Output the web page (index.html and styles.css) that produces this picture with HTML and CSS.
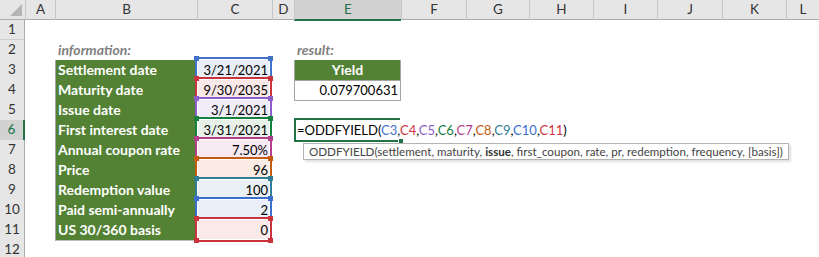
FILE: index.html
```html
<!DOCTYPE html>
<html>
<head>
<meta charset="utf-8">
<link rel="stylesheet" href="styles.css">
</head>
<body>
<div class="sheet">
  <div class="row hdr">
    <div class="corner"><svg width="25" height="19" viewBox="0 0 25 19"><polygon points="10,16 22,16 22,4" fill="#b5b5b5"/></svg></div>
    <div class="ch">A</div><div class="ch">B</div><div class="ch">C</div><div class="ch">D</div>
    <div class="ch sel">E</div><div class="ch">F</div><div class="ch">G</div><div class="ch">H</div>
    <div class="ch">I</div><div class="ch">J</div><div class="ch">K</div><div class="ch">L</div>
  </div>
  <div class="row"><div class="rh">1</div></div>
  <div class="row"><div class="rh">2</div><div class="cell b lbl">information:</div><div class="cell e lbl">result:</div></div>
  <div class="row"><div class="rh">3</div><div class="cell b g">Settlement date</div><div class="cell c k1">3/21/2021<span class="hl"><i class="tl"></i><i class="tr"></i></span></div><div class="cell e yh">Yield</div></div>
  <div class="row"><div class="rh">4</div><div class="cell b g">Maturity date</div><div class="cell c k2">9/30/2035<span class="hl"><i class="tl"></i><i class="tr"></i></span></div><div class="cell e yv">0.079700631</div></div>
  <div class="row"><div class="rh">5</div><div class="cell b g">Issue date</div><div class="cell c k3">3/1/2021<span class="hl"><i class="tl"></i><i class="tr"></i></span></div></div>
  <div class="row"><div class="rh sel">6</div><div class="cell b g">First interest date</div><div class="cell c k4">3/31/2021<span class="hl"><i class="tl"></i><i class="tr"></i></span></div>
    <div class="cell e edit"><span class="cur"><i class="fh"></i></span><span class="f">=ODDFYIELD(<span class="r1">C3</span>,<span class="r2">C4</span>,<span class="r3">C5</span>,<span class="r4">C6</span>,<span class="r5">C7</span>,<span class="r6">C8</span>,<span class="r7">C9</span>,<span class="r8">C10</span>,<span class="r9">C11</span>)</span>
      <div class="tip">ODDFYIELD(settlement, maturity, <b>issue</b>, first_coupon, rate, pr, redemption, frequency, [basis])</div>
    </div>
  </div>
  <div class="row"><div class="rh">7</div><div class="cell b g">Annual coupon rate</div><div class="cell c k5">7.50%<span class="hl"><i class="tl"></i><i class="tr"></i></span></div></div>
  <div class="row"><div class="rh">8</div><div class="cell b g">Price</div><div class="cell c k6">96<span class="hl"><i class="tl"></i><i class="tr"></i></span></div></div>
  <div class="row"><div class="rh">9</div><div class="cell b g">Redemption value</div><div class="cell c k7">100<span class="hl"><i class="tl"></i><i class="tr"></i></span></div></div>
  <div class="row"><div class="rh">10</div><div class="cell b g">Paid semi-annually</div><div class="cell c k8">2<span class="hl"><i class="tl"></i><i class="tr"></i></span></div></div>
  <div class="row"><div class="rh">11</div><div class="cell b g">US 30/360 basis</div><div class="cell c k9">0<span class="hl last"><i class="tl"></i><i class="tr"></i><i class="bl"></i><i class="br"></i></span></div></div>
  <div class="row"><div class="rh">12</div></div>
</div>
</body>
</html>
```
FILE: styles.css
```css
* { box-sizing: border-box; margin: 0; padding: 0; }
body {
  width: 819px; height: 257px; overflow: hidden; background: #fff;
  font-family: Lato, "Liberation Sans", sans-serif; font-size: 13px; color: #000;
}
.sheet { width: 819px; }
.row {
  display: grid;
  grid-template-columns: 25px 30px 142px 75px 22px 107px 65px 63px 64px 64px 65px 64px 33px;
  height: 20px;
}
.hdr { background: #e6e6e6; border-bottom: 1px solid #ababab; }
.corner { display: flex; }
.ch { border-left: 1px solid #c6c6c6; text-align: center; line-height: 19px; color: #333; font-size: 13.5px; }
.ch.sel { background: #d2d2d2; color: #217346; border-bottom: 2px solid #217346; margin-bottom: -1px; }
.rh {
  grid-column: 1; background: #e6e6e6; border-right: 1px solid #ababab; border-bottom: 1px solid #cdcdcd;
  text-align: center; line-height: 19px; color: #333; font-size: 13.5px;
}
.rh.sel { background: #d2d2d2; color: #217346; border-right: 2px solid #217346; }
.cell { grid-row: 1; line-height: 20px; white-space: nowrap; padding: 0 3px; }
.b { grid-column: 3; }
.c { grid-column: 4; }
.e { grid-column: 6; }
.lbl { color: #7f7f7f; font-style: italic; font-weight: bold; font-size: 14px; border-bottom: 1px solid #a5a5a5; }
.g { background: #548235; color: #fff; font-weight: bold; font-size: 14px; border-left: 1px solid #a5a5a5; border-bottom: 1px solid #bcbcbc; padding-left: 2px; }
.c { position: relative; text-align: right; padding-right: 4px; }
.hl {
  position: absolute; top: -3px; left: -2px; right: 0; bottom: 1px;
  border: 2px solid var(--k); box-shadow: inset 0 0 0 1px #fff;
}
.hl.last { bottom: -1px; }
.hl i { position: absolute; width: 5px; height: 5px; background: var(--k); }
.hl .tl { top: -3px; left: -3px; }
.hl .tr { top: -3px; right: -3px; }
.hl .bl { bottom: -3px; left: -3px; }
.hl .br { bottom: -3px; right: -3px; }
.k1 { --k: #3f72c8; background: #e9eef8; }
.k2 { --k: #c9343c; background: #f9e8e8; }
.k3 { --k: #8c5cc8; background: #f1edf8; }
.k4 { --k: #16803e; background: #e7f1ea; }
.k5 { --k: #b23e8c; background: #f7e9f2; }
.k6 { --k: #c55a11; background: #faece4; }
.k7 { --k: #2f7e94; background: #e8f0f3; }
.k8 { --k: #3a6fd0; background: #e9eef9; }
.k9 { --k: #c9343c; background: #f9e9e9; }
.r1 { color: #3f72c8; } .r2 { color: #d0343c; } .r3 { color: #8c5cc8; }
.r4 { color: #16803e; } .r5 { color: #b23e8c; } .r6 { color: #c55a11; }
.r7 { color: #2f7e94; } .r8 { color: #3a6fd0; } .r9 { color: #d0343c; }
.yh { background: #548235; color: #fff; font-weight: bold; font-size: 14px; text-align: center; border-left: 1px solid #a5a5a5; border-right: 1px solid #a5a5a5; border-bottom: 1px solid #a5a5a5; }
.yv { text-align: right; border-left: 1px solid #a5a5a5; border-right: 1px solid #a5a5a5; border-bottom: 1px solid #a5a5a5; padding-right: 2px; }
.edit { position: relative; overflow: visible; padding-left: 3px; }
.cur { position: absolute; top: -2px; left: 0; right: 1px; bottom: -1px; border: 2px solid #217346; border-right: none; }
.cur .fh { position: absolute; right: -4px; bottom: -4px; width: 6px; height: 6px; background: #217346; border: 1px solid #fff; }
.f { position: relative; }
.tip {
  position: absolute; left: 9px; top: 23px; height: 17px; padding: 0 5px;
  background: #fff; border: 1px solid #b4b4b4; box-shadow: 2px 2px 2px rgba(0,0,0,0.12);
  font-family: Lato, sans-serif; font-size: 11.6px; line-height: 15px; color: #444;
}
.tip b { color: #333; }
```
